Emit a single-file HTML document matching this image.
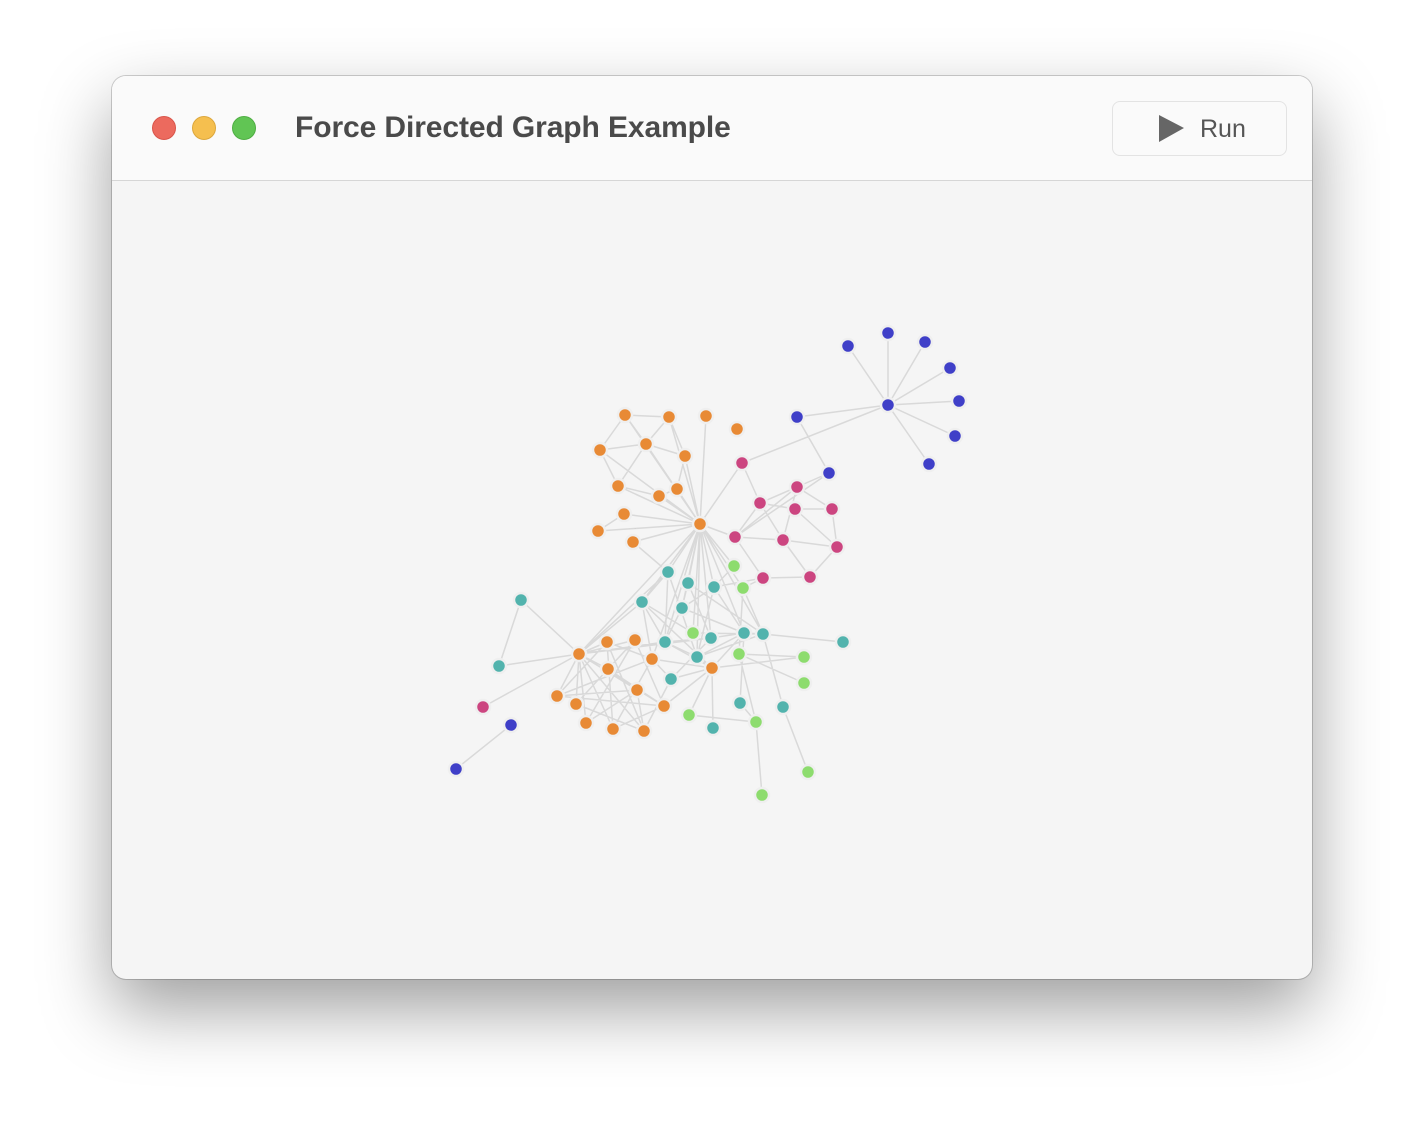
<!DOCTYPE html>
<html><head><meta charset="utf-8"><style>
html,body{margin:0;padding:0;width:1424px;height:1128px;background:#fff;overflow:hidden}
.win{position:absolute;left:112px;top:76px;width:1200px;height:903px;border-radius:14px;background:#f5f5f5;box-shadow:0 30px 70px rgba(0,0,0,.38),0 0 0 1px rgba(0,0,0,.18);overflow:hidden}
.bar{position:absolute;left:0;top:0;width:1200px;height:104px;background:#fafafa;border-bottom:1px solid #d6d6d6}
.dot{position:absolute;top:40px;width:24px;height:24px;border-radius:50%}
.t{position:absolute;left:183px;top:35px;font:600 30px "Liberation Sans",sans-serif;color:#4a4a4a;letter-spacing:-.1px}
.run{position:absolute;left:1000px;top:25px;width:173px;height:53px;border:1px solid #e3e3e3;border-radius:8px;background:#fafafa}
.run span{position:absolute;left:87px;top:13px;font:25px "Liberation Sans",sans-serif;color:#555}
svg{position:absolute;left:0;top:0}
</style></head><body>
<div class="win">
<div class="bar">
<div class="dot" style="left:40px;background:#ec6a5e;border:1px solid #d9554a;box-sizing:border-box"></div>
<div class="dot" style="left:80px;background:#f5bf4f;border:1px solid #dca73c;box-sizing:border-box"></div>
<div class="dot" style="left:120px;background:#61c554;border:1px solid #4fae43;box-sizing:border-box"></div>
<div class="t">Force Directed Graph Example</div>
<div class="run"><svg width="40" height="53" style="left:44px"><path d="M2 13 L27 26 L2 40Z" fill="#666"/></svg><span>Run</span></div>
</div>
</div>
<svg width="1424" height="1128" style="position:absolute;left:0;top:0">
<g stroke="#999" stroke-opacity=".3" stroke-width="1.5">
<path d="M888 405L848 346M888 405L888 333M888 405L925 342M888 405L950 368M888 405L959 401M888 405L955 436M888 405L929 464M888 405L797 417M888 405L742 463M797 417L829 473M829 473L735 537M829 473L797 487M456 769L511 725M700 524L625 415M700 524L669 417M700 524L706 416M700 524L600 450M700 524L646 444M700 524L685 456M700 524L618 486M700 524L659 496M700 524L677 489M700 524L624 514M700 524L598 531M700 524L633 542M700 524L742 463M700 524L735 537M700 524L668 572M700 524L688 583M700 524L714 587M700 524L642 602M700 524L682 608M700 524L665 642M700 524L711 638M700 524L744 633M700 524L579 654M700 524L697 657M700 524L652 659M700 524L734 566M700 524L743 588M700 524L693 633M700 524L763 634M625 415L669 417M625 415L646 444M625 415L600 450M669 417L685 456M669 417L646 444M646 444L685 456M600 450L618 486M618 486L659 496M659 496L677 489M677 489L685 456M624 514L598 531M633 542L668 572M600 450L646 444M618 486L646 444M735 537L797 487M735 537L760 503M735 537L783 540M735 537L763 578M760 503L797 487M760 503L795 509M795 509L832 509M797 487L832 509M832 509L837 547M783 540L837 547M783 540L810 577M763 578L810 577M837 547L810 577M760 503L783 540M795 509L837 547M797 487L783 540M763 578L714 587M763 578L743 588M742 463L760 503M521 600L579 654M521 600L499 666M499 666L579 654M483 707L579 654M579 654L642 602M579 654L668 572M579 654L607 642M579 654L635 640M579 654L608 669M579 654L557 696M579 654L576 704M579 654L637 690M579 654L664 706M579 654L586 723M579 654L613 729M579 654L644 731M579 654L665 642M579 654L711 638M607 642L652 659M607 642L557 696M607 642L644 731M635 640L608 669M635 640L664 706M635 640L586 723M652 659L557 696M652 659L613 729M652 659L712 668M608 669L637 690M608 669L576 704M608 669L664 706M637 690L586 723M637 690L644 731M637 690L557 696M664 706L613 729M664 706L712 668M576 704L644 731M586 723L635 640M613 729L607 642M557 696L664 706M712 668L665 642M712 668L697 657M712 668L744 633M712 668L671 679M712 668L689 715M712 668L713 728M712 668L804 657M712 668L642 602M665 642L697 657M665 642L711 638M665 642L642 602M665 642L682 608M697 657L744 633M697 657L763 634M711 638L744 633M744 633L763 634M763 634L843 642M744 633L740 703M763 634L783 707M783 707L808 772M740 703L756 722M756 722L762 795M756 722L689 715M739 654L804 657M739 654L804 683M739 654L756 722M668 572L642 602M688 583L682 608M714 587L682 608M714 587L744 633M688 583L711 638M668 572L697 657M642 602L693 633M682 608L744 633M671 679L644 731M671 679L652 659M693 633L763 634M743 588L763 634M734 566L714 587M743 588L739 654M711 638L671 679M642 602L652 659M668 572L665 642M714 587L697 657M688 583L763 634"/>
</g>
<g stroke="#efefef" stroke-width="2.5">
<g fill="#3f3fc8"><circle cx="888" cy="405" r="7"/><circle cx="848" cy="346" r="7"/><circle cx="888" cy="333" r="7"/><circle cx="925" cy="342" r="7"/><circle cx="950" cy="368" r="7"/><circle cx="959" cy="401" r="7"/><circle cx="955" cy="436" r="7"/><circle cx="929" cy="464" r="7"/><circle cx="797" cy="417" r="7"/><circle cx="829" cy="473" r="7"/><circle cx="456" cy="769" r="7"/><circle cx="511" cy="725" r="7"/></g>
<g fill="#e88a35"><circle cx="625" cy="415" r="7"/><circle cx="669" cy="417" r="7"/><circle cx="706" cy="416" r="7"/><circle cx="737" cy="429" r="7"/><circle cx="600" cy="450" r="7"/><circle cx="646" cy="444" r="7"/><circle cx="685" cy="456" r="7"/><circle cx="618" cy="486" r="7"/><circle cx="659" cy="496" r="7"/><circle cx="677" cy="489" r="7"/><circle cx="624" cy="514" r="7"/><circle cx="598" cy="531" r="7"/><circle cx="633" cy="542" r="7"/><circle cx="700" cy="524" r="7"/>
<circle cx="579" cy="654" r="7"/><circle cx="607" cy="642" r="7"/><circle cx="635" cy="640" r="7"/><circle cx="652" cy="659" r="7"/><circle cx="608" cy="669" r="7"/><circle cx="712" cy="668" r="7"/><circle cx="557" cy="696" r="7"/><circle cx="576" cy="704" r="7"/><circle cx="637" cy="690" r="7"/><circle cx="664" cy="706" r="7"/><circle cx="586" cy="723" r="7"/><circle cx="613" cy="729" r="7"/><circle cx="644" cy="731" r="7"/></g>
<g fill="#cc4580"><circle cx="742" cy="463" r="7"/><circle cx="797" cy="487" r="7"/><circle cx="760" cy="503" r="7"/><circle cx="795" cy="509" r="7"/><circle cx="832" cy="509" r="7"/><circle cx="735" cy="537" r="7"/><circle cx="783" cy="540" r="7"/><circle cx="837" cy="547" r="7"/><circle cx="763" cy="578" r="7"/><circle cx="810" cy="577" r="7"/><circle cx="483" cy="707" r="7"/></g>
<g fill="#52b3ad"><circle cx="668" cy="572" r="7"/><circle cx="688" cy="583" r="7"/><circle cx="714" cy="587" r="7"/><circle cx="642" cy="602" r="7"/><circle cx="682" cy="608" r="7"/><circle cx="521" cy="600" r="7"/><circle cx="499" cy="666" r="7"/><circle cx="665" cy="642" r="7"/><circle cx="711" cy="638" r="7"/><circle cx="744" cy="633" r="7"/><circle cx="763" cy="634" r="7"/><circle cx="843" cy="642" r="7"/><circle cx="697" cy="657" r="7"/><circle cx="671" cy="679" r="7"/><circle cx="740" cy="703" r="7"/><circle cx="783" cy="707" r="7"/><circle cx="713" cy="728" r="7"/></g>
<g fill="#8ddc6e"><circle cx="734" cy="566" r="7"/><circle cx="743" cy="588" r="7"/><circle cx="693" cy="633" r="7"/><circle cx="739" cy="654" r="7"/><circle cx="804" cy="657" r="7"/><circle cx="804" cy="683" r="7"/><circle cx="689" cy="715" r="7"/><circle cx="756" cy="722" r="7"/><circle cx="808" cy="772" r="7"/><circle cx="762" cy="795" r="7"/></g>
</g>
</svg>
</body></html>
